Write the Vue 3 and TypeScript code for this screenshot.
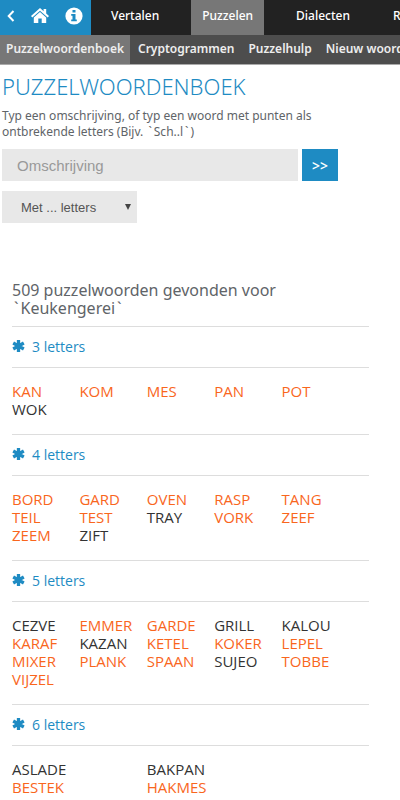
<script setup lang="ts">
interface Word {
  text: string
  linked: boolean
}

interface Group {
  count: number
  words: Word[]
}

// A leading dash marks a word without a page of its own; "." is an empty cell.
function parse(list: string): Word[] {
  return list.split(' ').map((item) => ({
    text: item.replace(/^[-.]/, ''),
    linked: !/^[-.]/.test(item),
  }))
}

const mainNav = ['Vertalen', 'Puzzelen', 'Dialecten', 'Rijmen']
const subNav = ['Puzzelwoordenboek', 'Cryptogrammen', 'Puzzelhulp', 'Nieuw woord']

const groups: Group[] = [
  { count: 3, words: parse('KAN KOM MES PAN POT -WOK') },
  { count: 4, words: parse('BORD GARD OVEN RASP TANG TEIL TEST -TRAY VORK ZEEF ZEEM -ZIFT') },
  {
    count: 5,
    words: parse(
      '-CEZVE EMMER GARDE -GRILL -KALOU KARAF -KAZAN KETEL KOKER LEPEL MIXER PLANK SPAAN -SUJEO TOBBE VIJZEL',
    ),
  },
  { count: 6, words: parse('-ASLADE . -BAKPAN . . BESTEK . HAKMES') },
]
</script>

<template>
  <div class="page">
    <header>
      <nav class="main-nav" aria-label="Hoofdmenu">
        <div class="tools">
          <a href="#" aria-label="Terug">
            <svg width="8" height="12" viewBox="0 0 8 12"><path d="M6.5 1 1.7 6l4.8 5" fill="none" stroke="#fff" stroke-width="2" /></svg>
          </a>
          <a href="#" aria-label="Home">
            <svg width="18" height="16" viewBox="0 0 18 16" fill="#fff">
              <path d="M9 0 0 8l1.3 1.4L9 2.7l7.7 6.7L18 8l-2.8-2.5V1h-2.6v2.2z" />
              <path d="M9 4.1 2.8 9.5V15h4.5v-4.5h3.4V15h4.5V9.5z" />
            </svg>
          </a>
          <a href="#" aria-label="Informatie">
            <svg width="18" height="18" viewBox="0 0 18 18">
              <circle cx="9" cy="9" r="8.6" fill="#fff" />
              <path d="M7.5 3h3v2.6h-3zM6.2 7h4.3v5.4h1.3v1.9H6.2v-1.9h1.3V8.8H6.2z" fill="#1e8bc3" />
            </svg>
          </a>
        </div>
        <a v-for="item in mainNav" :key="item" href="#" class="tab" :class="{ active: item === 'Puzzelen' }">{{ item }}</a>
      </nav>
      <nav class="sub-nav" aria-label="Puzzelen">
        <a v-for="(item, i) in subNav" :key="item" href="#" :class="{ active: i === 0 }">{{ item }}</a>
      </nav>
    </header>

    <main>
      <form class="search" @submit.prevent>
        <h1>PUZZELWOORDENBOEK</h1>
        <label class="hint" for="description">Typ een omschrijving, of typ een woord met punten als ontbrekende letters (Bijv. <span class="tick">`</span>Sch..l<span class="tick">`</span>)</label>
        <div class="field">
          <input id="description" type="text" placeholder="Omschrijving" />
          <button type="submit">&gt;&gt;</button>
        </div>
        <div class="picker">
          <select aria-label="Aantal letters">
            <option>Met ... letters</option>
          </select>
          <svg width="6" height="6" viewBox="0 0 6 6"><path d="M0 0h6L3 6z" fill="#444" /></svg>
        </div>
      </form>

      <section class="results">
        <h2>509 puzzelwoorden gevonden voor <span class="tick">`</span>Keukengerei<span class="tick">`</span></h2>
        <section v-for="group in groups" :key="group.count">
          <h3>
            <svg width="13" height="14" viewBox="0 0 13 14" stroke="#1e8bc3" stroke-width="3.3" stroke-linejoin="round">
              <path d="M6.5 1v12M1.2 4l10.6 6M11.8 4 1.2 10" />
            </svg>
            <a href="#">{{ group.count }} letters</a>
          </h3>
          <ul>
            <li v-for="(word, i) in group.words" :key="i">
              <a v-if="word.linked" href="#">{{ word.text }}</a>
              <template v-else>{{ word.text }}</template>
            </li>
          </ul>
        </section>
      </section>
    </main>
  </div>
</template>

<style>
body {
  overflow: hidden;
  background: #fff;
}
</style>

<style scoped>
.page {
  overflow: hidden;
  color: #606468;
  font-family: 'Open Sans', sans-serif;
}

a {
  color: inherit;
  text-decoration: none;
}

svg {
  display: block;
}

.main-nav {
  display: flex;
  gap: 21px;
  height: 35px;
  background: #222;
  color: #fff;
  font-family: 'Noto Sans', sans-serif;
  font-size: 12px;
  font-weight: 500;
  line-height: 32px;
  white-space: nowrap;
}

.tools {
  display: flex;
  flex: none;
  align-items: center;
  gap: 16px;
  box-sizing: border-box;
  width: 91px;
  margin-right: -12px;
  padding: 0 8px 4px 7px;
  background: #1e8bc3;
}

.tab {
  flex: none;
  padding: 0 11px;
}

.active {
  background: #777;
}

.sub-nav {
  display: flex;
  gap: 2px;
  height: 29px;
  border-bottom: 1px solid #aaa;
  background: #4d4d4d;
  color: #eee;
  font-family: 'Noto Sans', sans-serif;
  font-size: 12px;
  font-weight: 600;
  line-height: 28px;
  white-space: nowrap;
}

.sub-nav a {
  padding: 0 6px;
}

.search {
  padding: 7px 62px 0 2px;
}

h1 {
  margin: 0;
  color: #1e8bc3;
  font-family: 'Noto Sans', sans-serif;
  font-size: 22px;
  font-weight: 300;
  line-height: 28px;
  white-space: nowrap;
}

.hint {
  display: block;
  margin-top: 8px;
  font-family: 'Noto Sans', sans-serif;
  font-size: 12px;
  line-height: 16px;
}

.tick {
  padding: 0 2px;
}

.field {
  display: flex;
  gap: 4px;
  margin-top: 9px;
}

input {
  flex: 1;
  box-sizing: border-box;
  min-width: 0;
  height: 32px;
  padding: 0 15px;
  border: 0;
  border-radius: 0;
  background: #e8e8e8;
  font-family: 'Liberation Sans', sans-serif;
  font-size: 15px;
}

input::placeholder {
  color: #999;
}

button {
  width: 36px;
  padding: 0;
  border: 0;
  background: #1e8bc3;
  color: #fff;
  font-family: inherit;
  font-size: 14px;
  font-weight: 600;
}

.picker {
  display: grid;
  align-items: center;
  width: 135px;
  margin-top: 10px;
}

.picker > * {
  grid-area: 1 / 1;
}

.picker svg {
  justify-self: end;
  margin-right: 6px;
  pointer-events: none;
}

select {
  width: 100%;
  height: 32px;
  padding: 0 19px;
  border: 0;
  border-radius: 0;
  appearance: none;
  background: #e8e8e8;
  color: #555;
  font-family: 'Liberation Sans', sans-serif;
  font-size: 13px;
}

.results {
  padding: 58px 31px 0 12px;
}

h2 {
  margin: 0 0 9px;
  font-family: 'Noto Sans', sans-serif;
  font-size: 16px;
  font-weight: 400;
  line-height: 18px;
}

h3 {
  display: flex;
  align-items: center;
  gap: 7px;
  height: 38px;
  margin: 0;
  padding-bottom: 2px;
  border: solid #ddd;
  border-width: 1px 0;
  color: #1e8bc3;
  font-size: 14px;
  font-weight: 400;
}

ul {
  display: grid;
  grid-template-columns: repeat(5, 1fr);
  margin: 0;
  padding: 14px 20px 16px 0;
  color: #333;
  font-size: 15px;
  line-height: 18px;
  list-style: none;
}

li {
  min-width: 0;
}

li a {
  color: #f9661d;
}
</style>
